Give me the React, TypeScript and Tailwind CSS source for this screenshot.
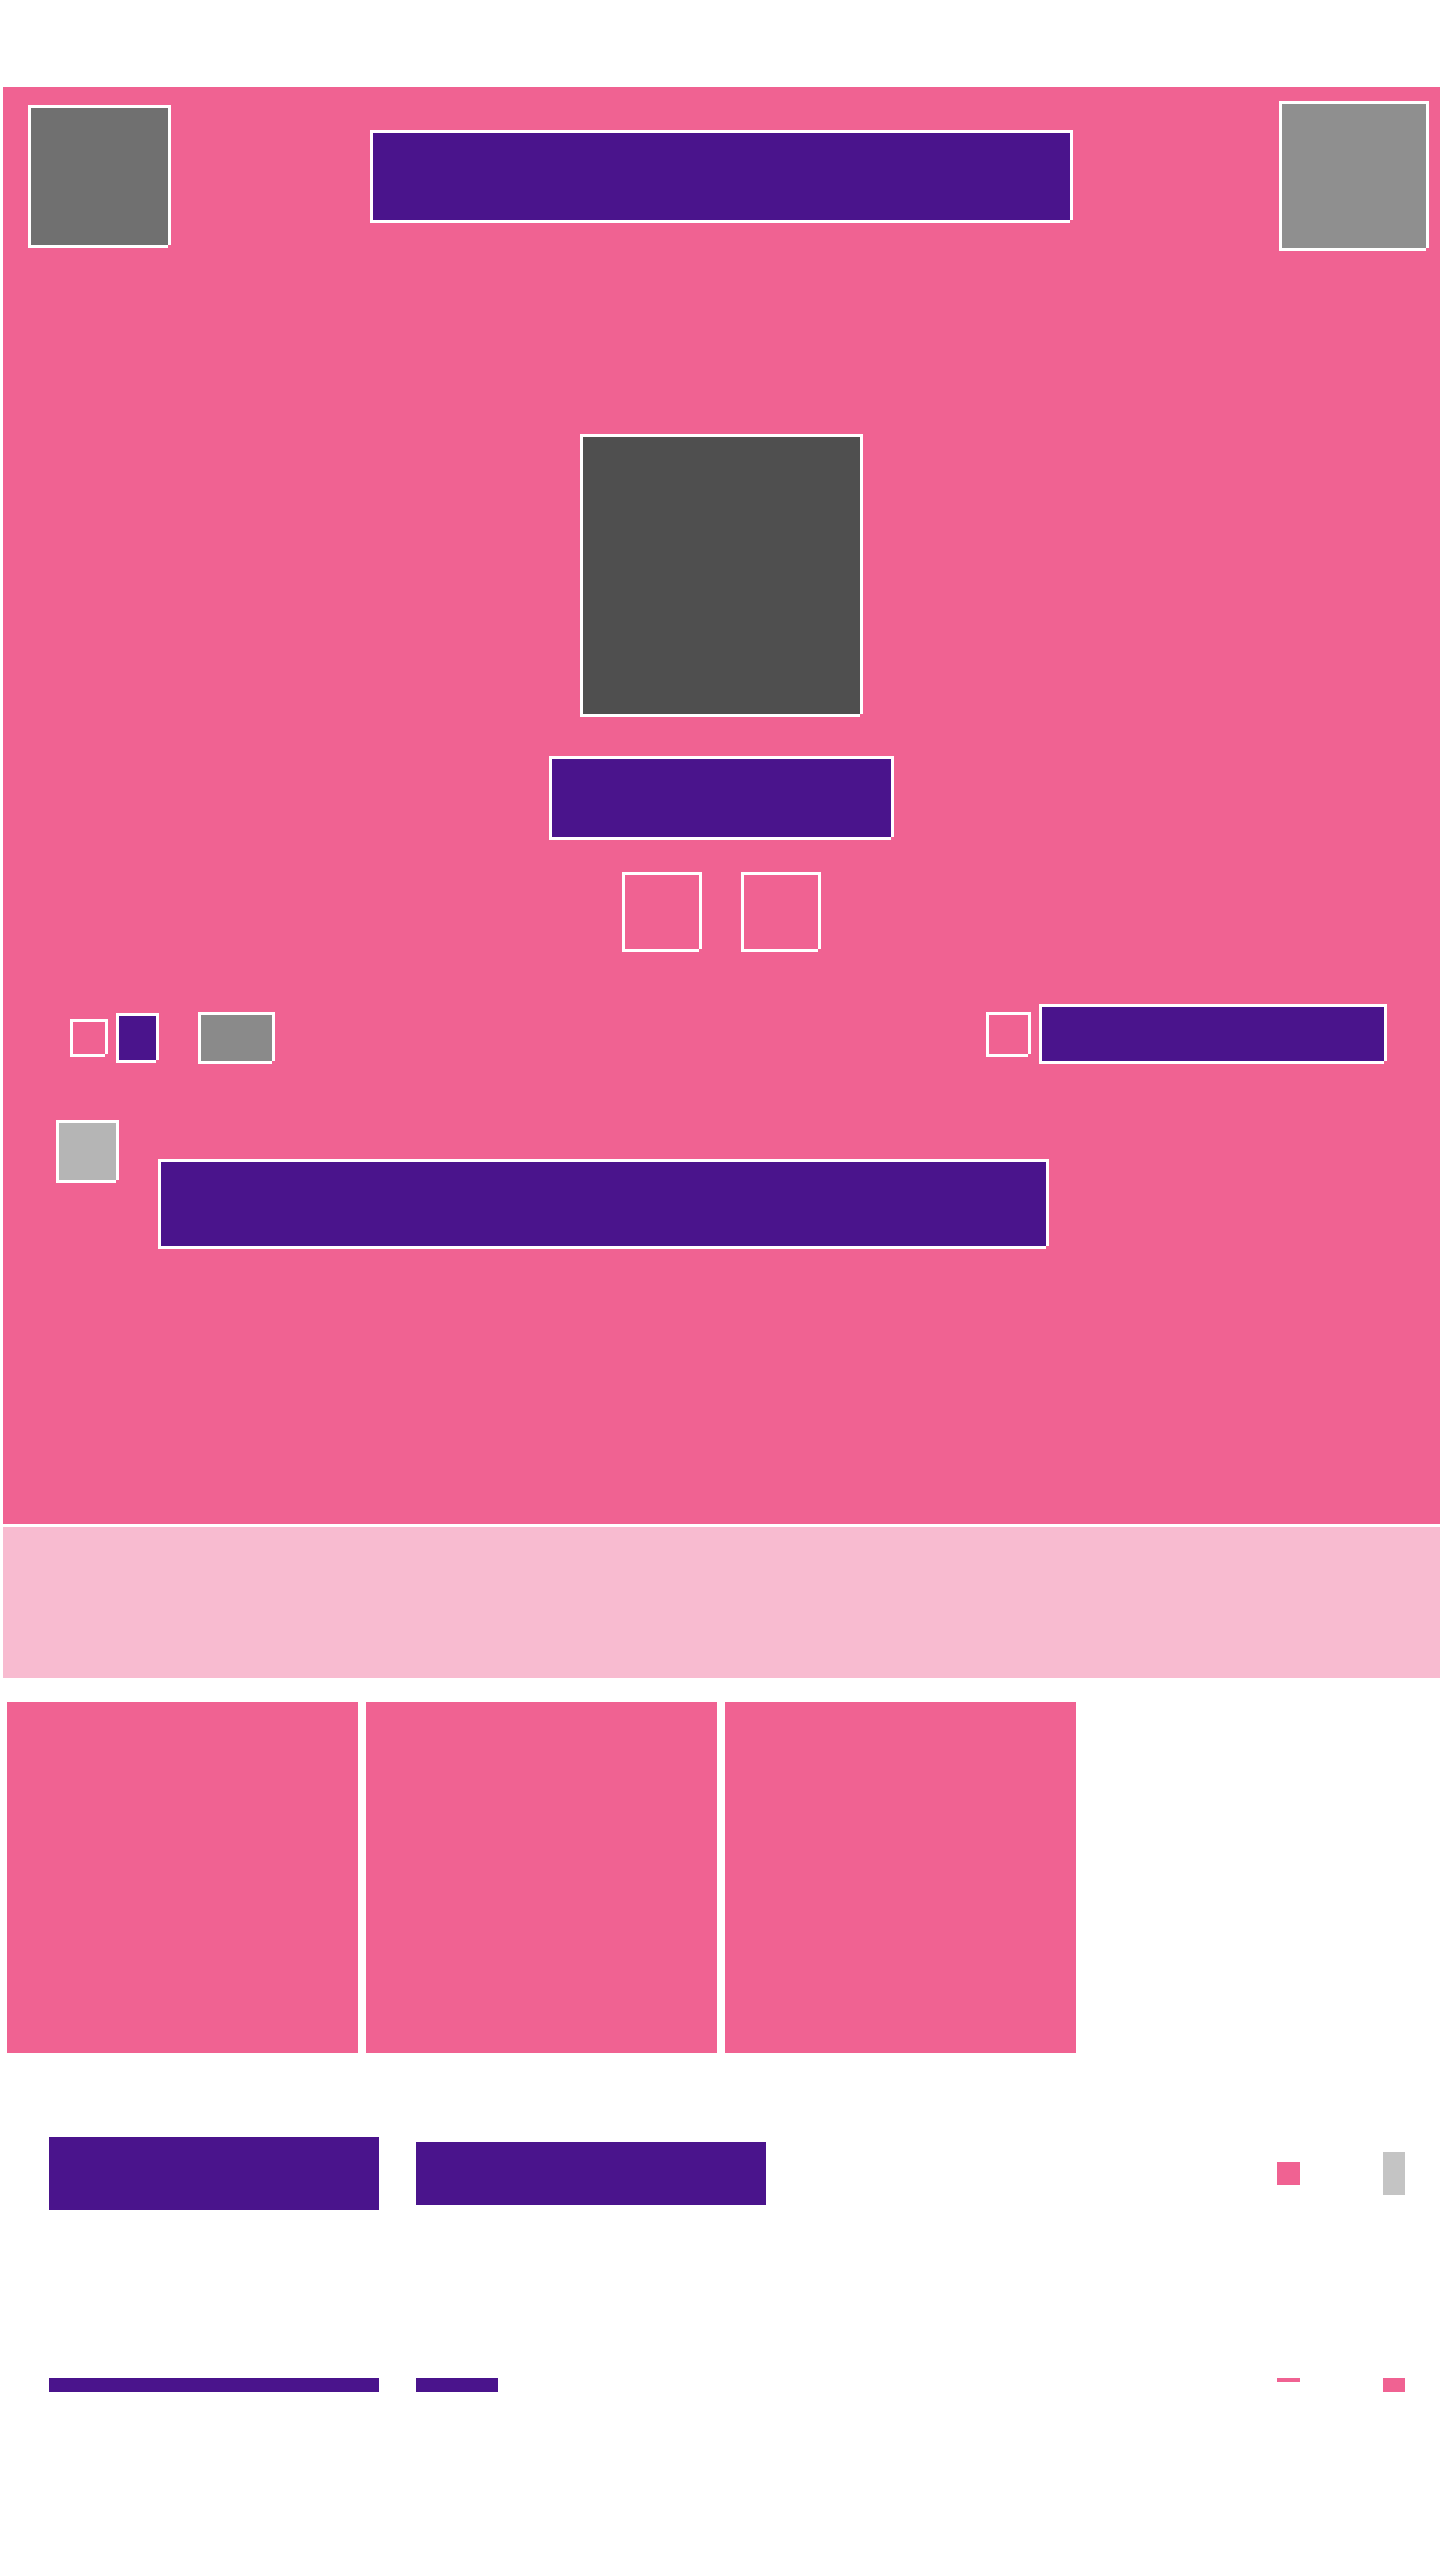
import { ReactNode } from 'react'

// framed block: white 3px border with the little cut at the bottom-right corner
function Frame({ className, children }: { className: string; children?: ReactNode }) {
    return (
        <div className={`relative shrink-0 border-[3px] border-white ${className}`}>
            {children}
            <span className="absolute -right-[3px] -bottom-[3px] w-[3px] h-[3px] bg-[#f06292]" />
        </div>
    )
}

function Card() {
    return <div className="w-[351px] h-[351px] bg-[#f06292] shrink-0" />
}

export default function App() {
    return (
        <div className="w-[1440px] min-h-[2560px] bg-white pt-[87px]">
            {/* hero */}
            <section className="ml-[3px] h-[1437px] bg-[#f06292] flex flex-col">
                <div className="flex items-center pt-[14px] pl-[25px] pr-[11px]">
                    <Frame className="w-[143px] h-[143px] bg-[#707070]" />
                    <Frame className="ml-[199px] w-[703px] h-[93px] bg-[#4a148c]" />
                    <Frame className="ml-auto w-[150px] h-[150px] bg-[#8f8f8f]" />
                </div>

                <div className="flex flex-col items-center">
                    <Frame className="mt-[183px] w-[283px] h-[283px] bg-[#4f4f4f]" />
                    <Frame className="mt-[39px] w-[345px] h-[84px] bg-[#4a148c]" />
                    <div className="mt-[32px] flex gap-[39px]">
                        <Frame className="w-[80px] h-[80px]" />
                        <Frame className="w-[80px] h-[80px]" />
                    </div>
                </div>

                <div className="mt-[52px] flex justify-between items-start pl-[67px] pr-[53px]">
                    <div className="mt-[8px] h-[52px] flex items-center">
                        <Frame className="w-[38px] h-[38px]" />
                        <Frame className="ml-[8px] w-[43px] h-[50px] bg-[#4a148c]" />
                        <Frame className="ml-[39px] w-[77px] h-[52px] bg-[#8a8a8a]" />
                    </div>
                    <div className="h-[60px] flex items-center">
                        <Frame className="w-[45px] h-[45px]" />
                        <Frame className="ml-[8px] w-[348px] h-[60px] bg-[#4a148c]" />
                    </div>
                </div>

                <div className="mt-[56px] flex items-start pl-[53px]">
                    <Frame className="w-[63px] h-[63px] bg-[#b5b5b5]" />
                    <Frame className="ml-[39px] mt-[39px] w-[891px] h-[90px] bg-[#4a148c]" />
                </div>
            </section>

            <div className="ml-[3px] mt-[3px] h-[151px] bg-[#f8bbd0]" />

            <div className="mt-[24px] pl-[7px] flex gap-2">
                <Card />
                <Card />
                <Card />
            </div>

            <div className="mt-[84px] flex items-center pl-[49px] pr-[35px]">
                <div className="w-[330px] h-[73px] bg-[#4a148c]" />
                <div className="ml-[37px] w-[350px] h-[63px] bg-[#4a148c]" />
                <div className="ml-auto w-[23px] h-[23px] bg-[#f06292]" />
                <div className="ml-[83px] w-[22px] h-[43px] bg-[#c4c4c4]" />
            </div>

            <div className="mt-[168px] flex items-start pl-[49px] pr-[35px]">
                <div className="w-[330px] h-[14px] bg-[#4a148c]" />
                <div className="ml-[37px] w-[82px] h-[14px] bg-[#4a148c]" />
                <div className="ml-auto w-[23px] h-[4px] bg-[#f06292]" />
                <div className="ml-[83px] w-[22px] h-[14px] bg-[#f06292]" />
            </div>
        </div>
    )
}
